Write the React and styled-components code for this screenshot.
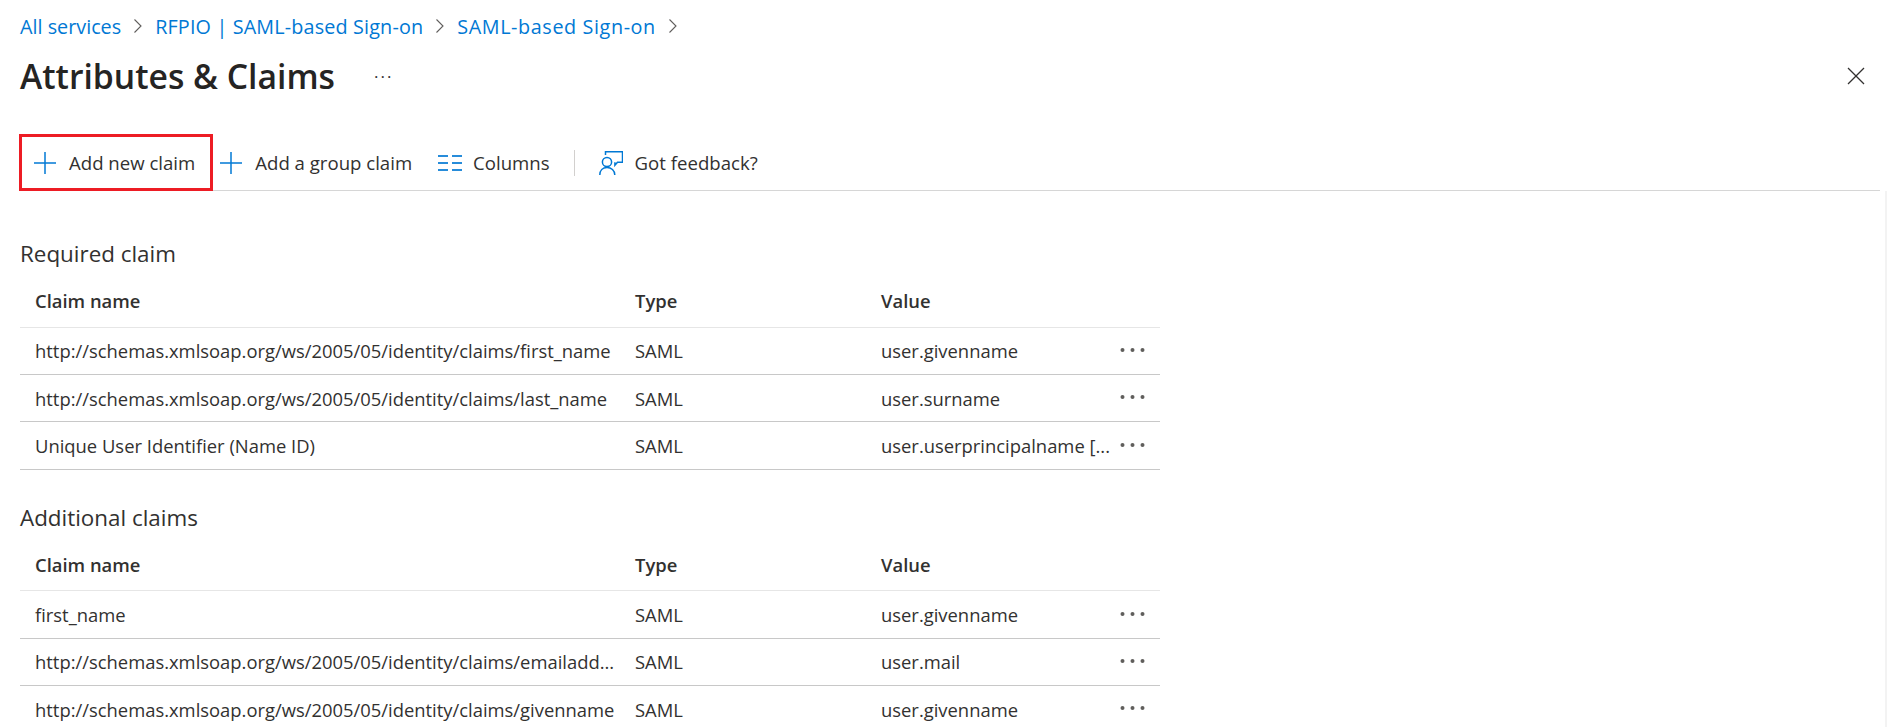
import React from "react";
import styled, { createGlobalStyle } from "styled-components";

const GlobalStyle = createGlobalStyle`
  html, body {
    margin: 0;
    padding: 0;
    height: 727px;
    overflow: hidden;
    background: #fff;
    font-family: "Open Sans", "Noto Sans", sans-serif;
    color: #323130;
  }
`;

const Page = styled.div`
  position: relative;
  width: 1887px;
  height: 727px;
  overflow: hidden;
  box-sizing: border-box;
  padding: 0 7px 0 20px;
`;

const ScrollTrack = styled.div`
  position: absolute;
  top: 191px;
  right: 0;
  bottom: 0;
  width: 2px;
  background: #f3f3f3;
`;

const Breadcrumbs = styled.nav`
  display: flex;
  align-items: center;
  height: 24px;
  padding-top: 14px;
  font-size: 19.8px;
`;

const Crumb = styled.a`
  color: #0078d4;
  text-decoration: none;
  letter-spacing: ${(p) => p.$spacing || 0}px;
`;

const CrumbSep = styled.svg`
  width: 10px;
  height: 16px;
  margin: 0 12px 0 12px;
  fill: none;
  stroke: #605e5c;
  stroke-width: 1.1;
`;

const TitleRow = styled.div`
  display: flex;
  align-items: center;
  height: 46px;
  margin-top: 15px;
  padding-right: 15px;
`;

const Title = styled.h1`
  margin: 0;
  font-size: 33.7px;
  font-weight: 600;
  color: #252423;
`;

const TitleMore = styled.span`
  margin-left: 39px;
  font-size: 17px;
  letter-spacing: 2px;
  line-height: 1;
  position: relative;
  top: -5px;
`;

const CloseButton = styled.svg`
  margin-left: auto;
  width: 18px;
  height: 18px;
  stroke: #323130;
  stroke-width: 1.3;
  fill: none;
`;

const Toolbar = styled.div`
  display: flex;
  align-items: center;
  height: 55px;
  margin-top: 36px;
  border-bottom: 1px solid #d6d6d6;
  font-size: 18.6px;
`;

const ToolButton = styled.button`
  display: flex;
  align-items: center;
  box-sizing: border-box;
  height: 57px;
  border: ${(p) => (p.$outlined ? "3px solid #ed1c24" : "0")};
  background: none;
  font: inherit;
  color: #323130;
  white-space: nowrap;
  padding: ${(p) => (p.$outlined ? "0 15px 0 11px" : "0")};
  margin: ${(p) => p.$margin || "0"};
`;

const ToolIcon = styled.svg`
  flex: none;
  width: 24px;
  height: 24px;
  margin-right: ${(p) => p.$gap || 12}px;
  fill: none;
  stroke: #0078d4;
  stroke-width: ${(p) => p.$stroke || 1.5};
`;

const ToolDivider = styled.div`
  width: 1px;
  height: 26px;
  background: #d2d0ce;
  margin: 0 24px 0 24px;
`;

const SectionTitle = styled.h2`
  margin: ${(p) => p.$top}px 0 5px;
  height: 30px;
  line-height: 30px;
  font-size: 22.4px;
  font-weight: 400;
  color: #323130;
`;

const Table = styled.div`
  width: 1140px;
`;

const Row = styled.div`
  display: grid;
  grid-template-columns: 600px 246px 1fr 27px 14px;
  align-items: center;
  height: ${(p) => (p.$head ? 53.6 : 47.4)}px;
  box-sizing: border-box;
  border-bottom: 1px solid ${(p) => (p.$head ? "#e6e6e6" : "#c8c8c8")};
  font-size: 18.4px;
  color: #323130;
  font-weight: ${(p) => (p.$head ? 600 : 400)};
`;

const Cell = styled.div`
  padding-left: 15px;
  white-space: nowrap;
  overflow: hidden;
`;

const RowMenu = styled.svg`
  width: 27px;
  height: 6px;
  fill: #605e5c;
  position: relative;
  top: -1px;
`;

const Plus = () => (
  <>
    <line x1="12" y1="1" x2="12" y2="23" />
    <line x1="1" y1="12" x2="23" y2="12" />
  </>
);

const Chevron = () => (
  <CrumbSep viewBox="0 0 10 16">
    <polyline points="1.5,1.5 8,8 1.5,14.5" />
  </CrumbSep>
);

const required = [
  ["http://schemas.xmlsoap.org/ws/2005/05/identity/claims/first_name", "SAML", "user.givenname"],
  ["http://schemas.xmlsoap.org/ws/2005/05/identity/claims/last_name", "SAML", "user.surname"],
  ["Unique User Identifier (Name ID)", "SAML", "user.userprincipalname [..."],
];

const additional = [
  ["first_name", "SAML", "user.givenname"],
  ["http://schemas.xmlsoap.org/ws/2005/05/identity/claims/emailadd...", "SAML", "user.mail"],
  ["http://schemas.xmlsoap.org/ws/2005/05/identity/claims/givenname", "SAML", "user.givenname"],
];

const ClaimsTable = ({ rows }) => (
  <Table>
    <Row $head>
      <Cell>Claim name</Cell>
      <Cell>Type</Cell>
      <Cell>Value</Cell>
    </Row>
    {rows.map((row) => (
      <Row key={row[0]}>
        <Cell>{row[0]}</Cell>
        <Cell>{row[1]}</Cell>
        <Cell>{row[2]}</Cell>
        <RowMenu viewBox="0 0 27 6">
          <circle cx="3.500" cy="3" r="2" />
          <circle cx="13.500" cy="3" r="2" />
          <circle cx="23.500" cy="3" r="2" />
        </RowMenu>
      </Row>
    ))}
  </Table>
);

const App = () => (
  <Page>
    <GlobalStyle />
    <Breadcrumbs>
      <Crumb>All services</Crumb>
      <Chevron />
      <Crumb $spacing={0.15}>RFPIO | SAML-based Sign-on</Crumb>
      <Chevron />
      <Crumb $spacing={0.6}>SAML-based Sign-on</Crumb>
      <Chevron />
    </Breadcrumbs>
    <TitleRow>
      <Title>Attributes &amp; Claims</Title>
      <TitleMore>...</TitleMore>
      <CloseButton viewBox="0 0 18 18">
        <line x1="1" y1="1" x2="17" y2="17" />
        <line x1="17" y1="1" x2="1" y2="17" />
      </CloseButton>
    </TitleRow>
    <Toolbar>
      <ToolButton $outlined $margin="0 0 0 -1px">
        <ToolIcon viewBox="0 0 24 24">
          <Plus />
        </ToolIcon>
        Add new claim
      </ToolButton>
      <ToolButton $margin="0 0 0 6px">
        <ToolIcon viewBox="0 0 24 24">
          <Plus />
        </ToolIcon>
        Add a group claim
      </ToolButton>
      <ToolButton $margin="0 0 0 26px">
        <ToolIcon viewBox="0 0 24 24" $gap={11} $stroke={1.7}>
          <line x1="0" y1="5" x2="10" y2="5" />
          <line x1="0" y1="12" x2="10" y2="12" />
          <line x1="0" y1="19" x2="10" y2="19" />
          <line x1="14" y1="5" x2="24" y2="5" />
          <line x1="14" y1="12" x2="24" y2="12" />
          <line x1="14" y1="19" x2="24" y2="19" />
        </ToolIcon>
        Columns
      </ToolButton>
      <ToolDivider />
      <ToolButton>
        <ToolIcon viewBox="0 0 24 24">
          <path d="M6.500 4V.8h17v10.400h-5l-2.600 3v-3" />
          <circle cx="8" cy="11" r="4.600" />
          <path d="M.8 24c0-4.500 3-7.500 7.200-7.500s7.800 3 7.800 7.500" />
        </ToolIcon>
        Got feedback?
      </ToolButton>
    </Toolbar>
    <SectionTitle $top={48}>Required claim</SectionTitle>
    <ClaimsTable rows={required} />
    <SectionTitle $top={33}>Additional claims</SectionTitle>
    <ClaimsTable rows={additional} />
    <ScrollTrack />
  </Page>
);

export default App;
